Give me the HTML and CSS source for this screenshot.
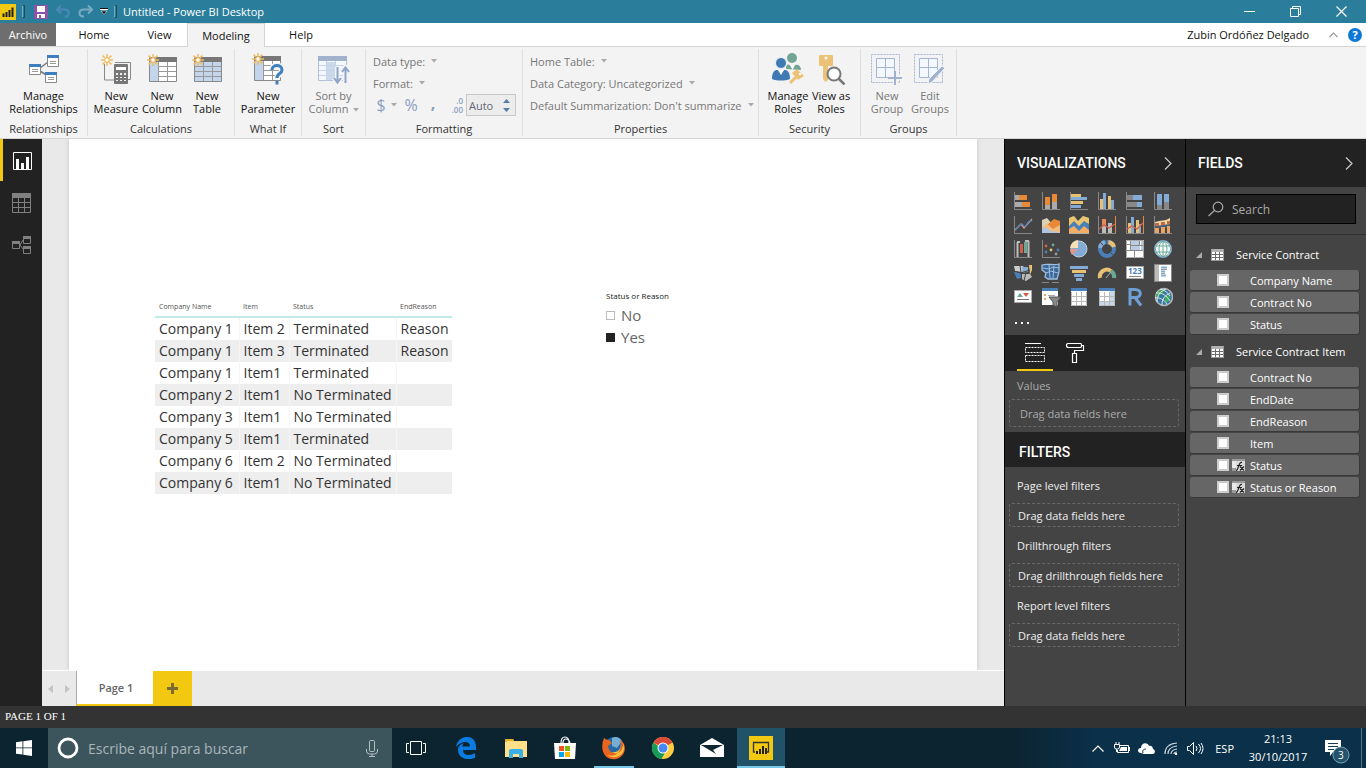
FILE: index.html
```html
<!DOCTYPE html>
<html lang="en">
<head>
<meta charset="utf-8">
<title>Untitled - Power BI Desktop</title>
<link rel="stylesheet" href="styles.css">
</head>
<body>
<svg class="defs" aria-hidden="true">
  <defs>
    <symbol id="spark" viewBox="0 0 12 12"><path d="M6 0v3M6 9v3M0 6h3M9 6h3M1.600 1.600l2.200 2.200M8.200 8.200l2.200 2.200M10.400 1.600l-2.200 2.200M3.800 8.200l-2.200 2.200" stroke="#eebd63" stroke-width="1.500"/><circle cx="6" cy="6" r="2.300" fill="#fff" stroke="#eebd63" stroke-width="1.300"/></symbol>
    <symbol id="tbl" viewBox="0 0 13 12"><path d="M0 0h13v12H0z" fill="#fff"/><path d="M0 0h13v3H0z" fill="#b0b0b0"/><path d="M0 5.500h13M0 8.500h13M4.500 3v9M8.500 3v9M0 11.500h13" stroke="#6a6a6a"/><path d="M.5 0v12M12.500 0v12M0 11.500h13" stroke="#999"/></symbol>
    <symbol id="calc" viewBox="0 0 13 12"><path d="M0 0h13v12H0z" fill="#999"/><path d="M0 2h4v7H0z" fill="#e8e8e8"/><path d="M4 2h9v10H4z" fill="#d8d8d8"/><path d="M4 11.500c3 0 2-9 6-8M5 6.500h5M8 7.500l4 4M12 7.500l-4 4" stroke="#222" stroke-width="1.200" fill="none"/></symbol>
    <symbol id="caret" viewBox="0 0 6 4"><path d="M0 0h6L3 3.500z" fill="currentColor"/></symbol>
  </defs>
</svg>

<header class="titlebar">
  <svg class="app-logo" width="16" height="16" viewBox="0 0 16 16"><path d="M0 0h16v16H0z" fill="#f2c811"/><path d="M3.500 13V9.500M6.500 13V8M9.500 13V6M12.500 13V3.500" stroke="#222" stroke-width="2"/></svg>
  <span class="bar-sep"></span>
  <button class="quick" aria-label="Save"><svg width="14" height="14" viewBox="0 0 14 14"><path d="M0 0h14v14H0z" fill="#8c53a8"/><path d="M3 1h8v6H3zM3 9h8v4H3z" fill="#fff"/><path d="M5 10h2v3H5z" fill="#8c53a8"/></svg></button>
  <button class="quick" aria-label="Undo"><svg width="15" height="13" viewBox="0 0 15 13"><path d="M5 0.500L1 4.500l4 4M1 4.500h8c5 0 5 7 0 7" fill="none" stroke="#4a88b8" stroke-width="2"/></svg></button>
  <button class="quick" aria-label="Redo"><svg width="15" height="13" viewBox="0 0 15 13"><path d="M10 .5l4 4-4 4M14 4.500H6c-6 0-6 7 0 7" fill="none" stroke="#78aac2" stroke-width="2"/></svg></button>
  <button class="quick quick-menu" aria-label="Customize"><svg width="8" height="7" viewBox="0 0 8 7"><path d="M0 .5h8" stroke="#111"/><path d="M0 1.500h8" stroke="#fff"/><path d="M1 3h6L4 6.500z" fill="#111" stroke="#fff" stroke-width=".5"/></svg></button>
  <span class="bar-sep"></span>
  <h1 class="title">Untitled - Power BI Desktop</h1>
  <div class="win-controls">
    <button aria-label="Minimize"><svg width="11" height="11" viewBox="0 0 11 11"><path d="M0 5.500h11" stroke="#fff"/></svg></button>
    <button aria-label="Restore"><svg width="11" height="11" viewBox="0 0 11 11"><path d="M.5 2.500h8v8h-8zM2.500 2V.5h8v8H9" fill="none" stroke="#fff"/></svg></button>
    <button aria-label="Close"><svg width="11" height="11" viewBox="0 0 11 11"><path d="M.5.5l10 10M10.500.5l-10 10" stroke="#fff" stroke-width="1.200"/></svg></button>
  </div>
</header>

<nav class="tabs">
  <button class="tab tab-file">Archivo</button>
  <button class="tab tab-home">Home</button>
  <button class="tab tab-view">View</button>
  <button class="tab tab-active">Modeling</button>
  <button class="tab tab-help">Help</button>
  <span class="user">Zubin Ordóñez Delgado</span>
  <button class="plain" aria-label="Collapse ribbon"><svg width="9" height="6" viewBox="0 0 9 6"><path d="M.5 5L4.500 1l4 4" fill="none" stroke="#999" stroke-width="1.200"/></svg></button>
  <button class="help" aria-label="Help">?</button>
</nav>

<section class="ribbon">
  <div class="group g-rel">
    <div class="group-body">
      <button class="big"><svg width="30" height="30" viewBox="0 0 30 30"><path d="M11 14l8-6M11 17l8 5" stroke="#777" stroke-width="1.500"/><g fill="#fff" stroke="#888"><path d="M18.500 1.500h11v11h-11zM.5 10.500h11v10H.5zM16.500 18.500h11v10h-11z"/></g><path d="M18 1h12v3H18zM0 10h12v3H0zM16 18h12v3H16z" fill="#3f7fbf"/><path d="M21 7.500h6M21 9.500h6M3 15.500h6M3 17.500h6M19 23.500h6M19 25.500h6" stroke="#999"/></svg><span>Manage<br>Relationships</span></button>
    </div>
    <div class="group-name">Relationships</div>
  </div>
  <div class="group g-calc">
    <div class="group-body">
      <button class="big"><svg width="30" height="30" viewBox="0 0 30 30"><path d="M3.500 10v16h11M14 8.500h15.500v17H27" fill="none" stroke="#888"/><use href="#spark" width="12" height="12"/><rect x="13" y="10" width="14" height="20" rx="1" fill="#777"/><path d="M15 13h10v3H15z" fill="#fff"/><path d="M15 19h2v2h-2zM19 19h2v2h-2zM23 19h2v2h-2zM15 23h2v1h-2zM19 23h2v1h-2zM23 23h2v1h-2zM15 26h2v1h-2zM19 26h2v1h-2zM23 26h2v1h-2z" fill="#eee"/></svg><span>New<br>Measure</span></button>
      <button class="big"><svg width="30" height="30" viewBox="0 0 30 30"><path d="M2.500 3.500h27v24h-27z" fill="#fff" stroke="#888"/><path d="M3 8h8v19H3z" fill="#c2d5ea"/><path d="M3 3h27v5H3z" fill="#777"/><path d="M11.500 8v19M20.500 8v19M11 12.500h18M11 17.500h18M11 22.500h18" stroke="#999"/><use href="#spark" width="12" height="12"/></svg><span>New<br>Column</span></button>
      <button class="big"><svg width="30" height="30" viewBox="0 0 30 30"><path d="M2.500 3.500h27v24h-27z" fill="#c2d5ea" stroke="#888"/><path d="M3 3h27v5H3z" fill="#777"/><path d="M11.500 8v19M20.500 8v19M3 12.500h26M3 17.500h26M3 22.500h26" stroke="#999"/><use href="#spark" width="12" height="12"/></svg><span>New<br>Table</span></button>
    </div>
    <div class="group-name">Calculations</div>
  </div>
  <div class="group g-what">
    <div class="group-body">
      <button class="big"><svg width="32" height="32" viewBox="0 0 32 32"><path d="M2.500 3.500h26v24h-26z" fill="#fff" stroke="#888"/><path d="M3 8h8v19H3z" fill="#c2d5ea"/><path d="M3 3h26v5H3z" fill="#777"/><path d="M11.500 8v19M20.500 8v19M11 12.500h18M11 17.500h18M11 22.500h18" stroke="#999"/><path d="M20 17c0-6 10-6 10 0 0 4-5 3-5 9M25 28v3" fill="none" stroke="#f3f3f3" stroke-width="6"/><path d="M20 17c0-6 10-6 10 0 0 4-5 3-5 8M25 28v3.500" fill="none" stroke="#3f7fbf" stroke-width="3"/><use href="#spark" width="12" height="12"/></svg><span>New<br>Parameter</span></button>
    </div>
    <div class="group-name">What If</div>
  </div>
  <div class="group g-sort">
    <div class="group-body">
      <button class="big off"><svg width="32" height="30" viewBox="0 0 32 30"><path d="M.5 3.500h28v23H.5z" fill="#f3f8ff" stroke="#b3c0d6"/><path d="M9 8h8v18H9z" fill="#cbd9ec"/><path d="M0 2h29v5H0z" fill="#a2b2cd"/><path d="M8.500 7v20M17.500 7v20M1 11.500h27M1 16.500h27M1 21.500h27" stroke="#c7d4e8"/><path d="M19.500 13v15M16 24l3.500 4.500L23 24M27.500 29V14M24 18l3.500-4.500L31 18" fill="none" stroke="#f3f3f3" stroke-width="5"/><path d="M19.500 13v15M16 24l3.500 4.500L23 24M27.500 29V14M24 18l3.500-4.500L31 18" fill="none" stroke="#8fa5c9" stroke-width="2"/></svg><span>Sort by<br>Column<svg class="caret" width="6" height="4"><use href="#caret"/></svg></span></button>
    </div>
    <div class="group-name">Sort</div>
  </div>
  <div class="group g-format">
    <div class="group-body lines">
      <button class="line">Data type: <svg class="caret" width="6" height="4"><use href="#caret"/></svg></button>
      <button class="line">Format: <svg class="caret" width="6" height="4"><use href="#caret"/></svg></button>
      <div class="format-row">
        <button class="sym" aria-label="Currency">$</button>
        <svg class="caret" width="6" height="4"><use href="#caret"/></svg>
        <button class="sym" aria-label="Percent">%</button>
        <button class="sym comma" aria-label="Thousands separator">,</button>
        <label class="dec" for="decimals" aria-label="Decimal places"><span>.0</span><span>.00</span></label>
        <span class="auto"><input id="decimals" value="Auto"><svg width="7" height="13" viewBox="0 0 7 13"><path d="M0 4l3.500-4L7 4zM0 9h7l-3.500 4z" fill="#5a7aa8"/></svg></span>
      </div>
    </div>
    <div class="group-name">Formatting</div>
  </div>
  <div class="group g-prop">
    <div class="group-body lines">
      <button class="line">Home Table: <svg class="caret" width="6" height="4"><use href="#caret"/></svg></button>
      <button class="line">Data Category: Uncategorized <svg class="caret" width="6" height="4"><use href="#caret"/></svg></button>
      <button class="line">Default Summarization: Don't summarize <svg class="caret" width="6" height="4"><use href="#caret"/></svg></button>
    </div>
    <div class="group-name">Properties</div>
  </div>
  <div class="group g-sec">
    <div class="group-body">
      <button class="big"><svg width="32" height="32" viewBox="0 0 32 32"><circle cx="20" cy="5" r="5" fill="#72a593"/><path d="M14 16c0-6 3-5 6-2 4-4 9-2 9 3z" fill="#72a593"/><path d="M18 12l2.500 5 2.500-5z" fill="#fff"/><circle cx="9" cy="10" r="5.500" fill="#3f7ab5" stroke="#f3f3f3"/><path d="M0 26c0-10 5-10 9-8 4-2 9-2 9 8-5 2-13 2-18 0z" fill="#3f7ab5"/><path d="M6 17l3 5 3-5z" fill="#fff"/><path d="M18 30l7-7" stroke="#ecc276" stroke-width="3"/><path d="M20 20l5-4 7 7-6 4z" fill="#ecc276"/><circle cx="28" cy="21" r="1.200" fill="#fff"/></svg><span>Manage<br>Roles</span></button>
      <button class="big"><svg width="30" height="32" viewBox="0 0 30 32"><rect x="3" y="2" width="14" height="11" rx="1" fill="#ecc276"/><circle cx="10" cy="5" r="1.500" fill="#fff"/><path d="M7 13h5v14l-2.500 2L7 26z" fill="#ecc276"/><circle cx="18" cy="21" r="6.500" fill="#fff" stroke="#777" stroke-width="2"/><path d="M22.500 25.500l6 6" stroke="#777" stroke-width="2.500"/></svg><span>View as<br>Roles</span></button>
    </div>
    <div class="group-name">Security</div>
  </div>
  <div class="group g-groups">
    <div class="group-body">
      <button class="big off"><svg width="32" height="32" viewBox="0 0 32 32"><path d="M.5 1.500h28v28H.5z" fill="none" stroke="#a5b5d2" stroke-dasharray="2 1"/><path d="M5.500 5.500h18v19h-18zM14.500 5v19M5 14.500h18" fill="#f3f8ff" stroke="#a5b5d2"/><path d="M24.500 18v13M18 24.500h13" stroke="#f3f3f3" stroke-width="5"/><path d="M24 18v14M17 25h14" stroke="#a0b1d0" stroke-width="2"/></svg><span>New<br>Group</span></button>
      <button class="big off"><svg width="32" height="32" viewBox="0 0 32 32"><path d="M.5 1.500h28v28H.5z" fill="none" stroke="#a5b5d2" stroke-dasharray="2 1"/><path d="M5.500 5.500h18v19h-18zM14.500 5v19M5 14.500h18" fill="#f3f8ff" stroke="#a5b5d2"/><path d="M31 15L18 29l-4 2 1-5 13-13z" fill="#a0b1d0" stroke="#f3f3f3"/></svg><span>Edit<br>Groups</span></button>
    </div>
    <div class="group-name">Groups</div>
  </div>
</section>

<main class="workspace">
  <nav class="rail">
    <button class="rail-item rail-on" aria-label="Report"><svg width="19" height="18" viewBox="0 0 19 18"><path d="M.5.5h18v17H.5z" fill="none" stroke="#fff"/><path d="M3 7h3v10H3zM8 11h3v6H8zM13 5h3v12h-3z" fill="#fff"/></svg></button>
    <button class="rail-item" aria-label="Data"><svg width="19" height="20" viewBox="0 0 19 20"><path d="M0 0h19v5H0z" fill="#808080"/><path d="M.5.5h18v19H.5zM6.500 5v14M12.500 5v14M0 9.500h19M0 14.500h19" fill="none" stroke="#808080"/></svg></button>
    <button class="rail-item" aria-label="Relationships"><svg width="19" height="18" viewBox="0 0 19 18"><path d="M.5 5.500h7v7h-7zM11.500.5h7v7h-7zM11.500 10.500h7v7h-7zM8 9l3-5M8 9l3 4" fill="none" stroke="#808080"/><path d="M0 5h8v3H0zM11 0h8v3h-8zM11 10h8v3h-8z" fill="#808080"/></svg></button>
  </nav>

  <section class="report">
    <div class="canvas">
      <table class="visual data">
        <thead><tr><th class="c-name">Company Name</th><th class="c-item">Item</th><th class="c-status">Status</th><th>EndReason</th></tr></thead>
        <tbody>
          <tr><td>Company 1</td><td>Item 2</td><td>Terminated</td><td>Reason</td></tr>
          <tr><td>Company 1</td><td>Item 3</td><td>Terminated</td><td>Reason</td></tr>
          <tr><td>Company 1</td><td>Item1</td><td>Terminated</td><td></td></tr>
          <tr><td>Company 2</td><td>Item1</td><td>No Terminated</td><td></td></tr>
          <tr><td>Company 3</td><td>Item1</td><td>No Terminated</td><td></td></tr>
          <tr><td>Company 5</td><td>Item1</td><td>Terminated</td><td></td></tr>
          <tr><td>Company 6</td><td>Item 2</td><td>No Terminated</td><td></td></tr>
          <tr><td>Company 6</td><td>Item1</td><td>No Terminated</td><td></td></tr>
        </tbody>
      </table>
      <div class="visual slicer">
        <div class="slicer-title">Status or Reason</div>
        <label><input type="checkbox">No</label>
        <label><input type="checkbox" checked>Yes</label>
      </div>
    </div>
    <div class="pages">
      <button class="arrow" aria-label="Previous page"><svg width="5" height="8" viewBox="0 0 5 8"><path d="M5 0v8L0 4z" fill="#c3c3c3"/></svg></button>
      <button class="arrow" aria-label="Next page"><svg width="5" height="8" viewBox="0 0 5 8"><path d="M0 0v8l5-4z" fill="#c3c3c3"/></svg></button>
      <button class="page-tab">Page 1</button>
      <button class="page-add" aria-label="Add page"><svg width="11" height="11" viewBox="0 0 11 11"><path d="M5.500 0v11M0 5.500h11" stroke="#7a6c35" stroke-width="3"/></svg></button>
    </div>
  </section>

  <aside class="pane">
    <header class="pane-head"><h2>VISUALIZATIONS</h2><button class="plain" aria-label="Collapse"><svg width="8" height="13" viewBox="0 0 8 13"><path d="M1 .5l6 6-6 6" fill="none" stroke="#ccc" stroke-width="1.200"/></svg></button></header>
    <div class="gallery">
      <svg viewBox="0 0 20 20"><path d="M1.500 1v17.500H19" fill="none" stroke="#888"/><path d="M2 4h4v5H2zM2 11h7v5H2z" fill="#aaa"/><path d="M6 4h8v5H6zM9 11h8v5H9z" fill="#e8893a"/></svg>
      <svg viewBox="0 0 20 20"><path d="M1.500 1v17.500H19" fill="none" stroke="#888"/><path d="M4 14h5v4H4zM11 11h5v7h-5z" fill="#aaa"/><path d="M4 6h5v8H4zM11 3h5v8h-5z" fill="#e8893a"/></svg>
      <svg viewBox="0 0 20 20"><path d="M1.500 1v17.500H19" fill="none" stroke="#888"/><path d="M2 3h10v3H2zM2 10h12v3H2z" fill="#e9c172"/><path d="M2 6h16v3H2zM2 14h10v3H2z" fill="#84abd6"/></svg>
      <svg viewBox="0 0 20 20"><path d="M1.500 1v17.500H19" fill="none" stroke="#888"/><path d="M3 8h3v10H3zM11 5h3v13h-3z" fill="#e9c172"/><path d="M6 2h3v16H6zM14 9h3v9h-3z" fill="#84abd6"/></svg>
      <svg viewBox="0 0 20 20"><path d="M1.500 1v17.500H19" fill="none" stroke="#888"/><path d="M2 4h6v5H2zM2 11h10v5H2z" fill="#888"/><path d="M8 4h9v5H8zM12 11h5v5h-5z" fill="#84abd6"/></svg>
      <svg viewBox="0 0 20 20"><path d="M1.500 1v17.500H19" fill="none" stroke="#888"/><path d="M4 14h5v4H4zM11 11h5v7h-5z" fill="#888"/><path d="M4 3h5v11H4zM11 3h5v8h-5z" fill="#84abd6"/></svg>

      <svg viewBox="0 0 20 20"><path d="M1.500 1v17.500H19" fill="none" stroke="#888"/><path d="M2 15l6-6 3 4 8-9" fill="none" stroke="#e3978b" stroke-width="1.300"/><path d="M2 14c4 0 5-6 7-5s3 5 5 0 3-2 5-3" fill="none" stroke="#4a80b8" stroke-width="1.300"/></svg>
      <svg viewBox="0 0 20 20"><path d="M1 5l5-2 13 15H1z" fill="#ddd1b4"/><path d="M1 14l6-5 6-5 6 2v12H1z" fill="#e8893a"/><path d="M1 12l5-3 6 5 7-4v8H1z" fill="#f2bd82"/><path d="M1 14c4-4 6 1 9 2s5 0 9 2H1z" fill="#aec5df"/></svg>
      <svg viewBox="0 0 20 20"><path d="M0 3l5-2 4 5 5-5 6 2v15H0z" fill="#4a80b8"/><path d="M0 3l5-2 4 5 5-5 6 2v6l-5-3-5 5-5-5-5 5z" fill="#ecc46c"/><path d="M0 14l5-3 5 5 5-5 5 4v3H0z" fill="#f5ad66"/><path d="M0 18.500h20" stroke="#aaa"/></svg>
      <svg viewBox="0 0 20 20"><path d="M1.500 1v17.500H19" fill="none" stroke="#888"/><path d="M5 4h4v14H5zM11 8h4v10h-4z" fill="#bbb"/><path d="M5 4h4v7H5z" fill="#e8895a"/><path d="M2 14l5-4 5 3 6-4" fill="none" stroke="#d35e46" stroke-width="1.300"/><path d="M18.500 1v17" stroke="#e8893a"/></svg>
      <svg viewBox="0 0 20 20"><path d="M1.500 1v17.500H19" fill="none" stroke="#888"/><path d="M3 8h3v10H3zM11 5h3v13h-3z" fill="#e9c172"/><path d="M6 2h3v16H6zM14 9h2v9h-2z" fill="#84abd6"/><path d="M2 14l5-3 5 3 6-6" fill="none" stroke="#d35e46" stroke-width="1.300"/><path d="M18.500 1v17" stroke="#e8893a"/></svg>
      <svg viewBox="0 0 20 20"><path d="M1.500 1v17.500H19" fill="none" stroke="#888"/><path d="M2 7l4-1 7-1 4-2v9H2z" fill="#f1d4a0"/><path d="M2 11l15-2v4H2z" fill="#4d5d73"/><path d="M2 8h4v3H2zM8 7h4v3H8zM14 6h3v3h-3z" fill="#b96e49"/><path d="M2 13h4v5H2zM8 12h4v6H8zM14 11h3v7h-3z" fill="#e9a466"/></svg>

      <svg viewBox="0 0 20 20"><path d="M1.500 1v17.500H19" fill="none" stroke="#888"/><path d="M4.500 3v15M15.500 2v16M4 3h3M12 2h4" stroke="#bbb" stroke-width="2"/><path d="M7 5h3v9H7z" fill="#d35e46"/><path d="M11 3h3v11h-3z" fill="#6aaa94"/></svg>
      <svg viewBox="0 0 20 20"><path d="M1.500 1v17.500H19" fill="none" stroke="#888"/><circle cx="5" cy="7" r="1.400" fill="#d35e46"/><circle cx="12" cy="6" r="1.400" fill="#6aaa94"/><circle cx="5" cy="13" r="1.400" fill="#4a80b8"/><circle cx="10" cy="11" r="1.400" fill="#e9c172"/><circle cx="17" cy="11" r="1.400" fill="#4a80b8"/><circle cx="15" cy="15" r="1.400" fill="#999"/></svg>
      <svg viewBox="0 0 20 20"><circle cx="10" cy="10" r="8" fill="#84abd6" stroke="#c0cfdf"/><path d="M9 9V1a9 9 0 0 0-8 8z" fill="#f5e0b7"/><path d="M9 10L3 16a9 9 0 0 1-2-6z" fill="#e3978b"/></svg>
      <svg viewBox="0 0 20 20"><circle cx="10" cy="10" r="7" fill="none" stroke="#4a80b8" stroke-width="4"/><path d="M10 3a7 7 0 0 1 6 4M3 9a7 7 0 0 1 5-6" fill="none" stroke="#84abd6" stroke-width="4"/><path d="M12 3a7 7 0 0 1 5 5" fill="none" stroke="#e9c172" stroke-width="4"/><path d="M3 3l3 3M14 14l3 3M10 0v5" stroke="#444"/></svg>
      <svg viewBox="0 0 20 20"><path d="M1 1h18v18H1z" fill="#fff"/><path d="M6 2h9v9H6zM16 2h2v9h-2z" fill="#b8cce2"/><path d="M5.500 1v10M1 5.500h4M1 11.500h18M9.500 11v7M6 6.500h13M14.500 2v5" fill="none" stroke="#888"/><path d="M1.500 1.500h17v17h-17z" fill="none" stroke="#aaa"/></svg>
      <svg viewBox="0 0 20 20"><circle cx="10" cy="10" r="8.500" fill="#fff"/><g fill="none" stroke="#6aaa94"><circle cx="10" cy="10" r="7.500"/><ellipse cx="10" cy="10" rx="4" ry="7.500"/><path d="M10 2v16M3 7h14M3 13h14"/></g><circle cx="10" cy="10" r="8.500" fill="none" stroke="#6d9ed4"/></svg>

      <svg viewBox="0 0 20 20"><path d="M1 3h9l2 3-3 3-7-1z" fill="#ccc"/><path d="M9 4h6v5l-5 1z" fill="#84abd6"/><path d="M16 2h3v5l-2 5z" fill="#e9c172"/><path d="M1 9l7 1v5l-4 1z" fill="#4a80b8"/><path d="M9 11h8l2 3-6 4-5-2z" fill="#bbb"/><path d="M1 8l7 2 9-3M7 2l2 16M13 9l-2 9" fill="none" stroke="#444"/></svg>
      <svg viewBox="0 0 20 20"><path d="M1 2c6-2 11 1 17-1v8l-2 7H7l-3-2 1-4-4-3z" fill="#3a6795" stroke="#9fc0e2" stroke-width="1.300"/><path d="M2 5l6 1 4-2 6 1M5 10l5-2 7 2M8 2l1 13M13 3l-1 12" fill="none" stroke="#9fc0e2"/><path d="M1 19.500h7M11 19.500h7" stroke="#888"/></svg>
      <svg viewBox="0 0 20 20"><path d="M1 3h18v3H1zM5 11h10v3H5z" fill="#84abd6"/><path d="M3 7h14v3H3z" fill="#e9c172"/><path d="M7 15h6v3H7z" fill="#84abd6"/></svg>
      <svg viewBox="0 0 20 20"><path d="M3 15a7 7 0 0 1 11-7" fill="none" stroke="#e9c172" stroke-width="4"/><path d="M14 8a7 7 0 0 1 3 7" fill="none" stroke="#6aaa94" stroke-width="4"/><path d="M9 15l5-6" stroke="#aaa"/></svg>
      <svg viewBox="0 0 20 20"><path d="M1.500 3.500h17v12h-17z" fill="#fff" stroke="#aaa"/><text x="3" y="11" font-size="8" font-weight="700" fill="#4a80b8">123</text><path d="M4 13.500h12" stroke="#888"/></svg>
      <svg viewBox="0 0 20 20"><path d="M1.500 1.500h17v17h-17z" fill="#fff" stroke="#888"/><path d="M2 2h4v16H2z" fill="#bbb"/><path d="M8 4.500h6M8 8.500h4M8 12.500h5" stroke="#84abd6" stroke-width="2"/><path d="M8 6.500h6M8 10.500h4" stroke="#999"/></svg>

      <svg viewBox="0 0 20 20"><path d="M1.500 3.500h17v12h-17z" fill="#fff" stroke="#aaa"/><path d="M4 10l3-4 3 4z" fill="#6aaa94"/><path d="M10 6h6l-3 4z" fill="#d35e46"/><path d="M4 12.500h12" stroke="#777"/></svg>
      <svg viewBox="0 0 20 20"><path d="M1 1h16v17H1z" fill="#fff"/><path d="M1 1h16v3H1z" fill="#4a80b8"/><path d="M3 7h2v2H3zM3 11h2v2H3z" fill="#e9a466"/><path d="M7 8.500h7" stroke="#aaa"/><path d="M8 10h12l-4 5v5l-4-2v-3z" fill="#888" stroke="#555"/></svg>
      <svg viewBox="0 0 20 20"><path d="M2 1h16v18H2z" fill="#fff"/><path d="M2 1h16v3H2z" fill="#4a80b8"/><path d="M7.500 5v14M12.500 5v14M2 9.500h16M2 14.500h16M2.500 5v13.500h15V5" fill="none" stroke="#b9b9b9"/></svg>
      <svg viewBox="0 0 20 20"><path d="M2 1h16v18H2z" fill="#fff"/><path d="M13 4h5v15h-5zM2 15h16v4H2z" fill="#c7d8eb"/><path d="M2 1h16v3H2z" fill="#4a80b8"/><path d="M7.500 5v14M12.500 5v14M2 9.500h16M2 14.500h16M2.500 5v13.500h15V5" fill="none" stroke="#b9b9b9"/></svg>
      <svg viewBox="0 0 20 20"><path d="M5 18.500V2.500h5c7 0 7 8 0 8H5M10 10.500l6 8" fill="none" stroke="#6d9ed4" stroke-width="3"/></svg>
      <svg viewBox="0 0 20 20"><circle cx="11" cy="10" r="8.500" fill="#3776a9" stroke="#b6b6b6" stroke-width="1.500"/><path d="M3 8c2-5 6-6 9-5l-3 4-3 1-1 4zM12 9l5-1-1 6-4 2z" fill="#3fae5c"/><path d="M3 6c6-1 11 3 14 8M2 11c5-1 9 2 12 6M7 2c5 1 8 4 10 7M13 2C7 4 4 9 4 15M17 6c-5 2-8 6-8 12" fill="none" stroke="#dce5df"/></svg>
      <button class="more" aria-label="More visuals"><svg viewBox="0 0 20 20"><path d="M2 11h2v2H2zM8 11h2v2H8zM14 11h2v2h-2z" fill="#fff"/></svg></button>
    </div>
    <div class="well-tabs">
      <button class="well-tab well-on" aria-label="Fields"><svg width="20" height="20" viewBox="0 0 20 20"><path d="M0 .5h16" stroke="#fff"/><path d="M.5 4.500h19v5H.5zM.5 12.500h19v6H.5z" fill="none" stroke="#fff" stroke-dasharray="2 1"/></svg></button>
      <button class="well-tab" aria-label="Format"><svg width="20" height="20" viewBox="0 0 20 20"><path d="M3.500.5h12q1 0 1 2t-1 2h-12q-2 0-2-2t2-2zM16 2.500h2.500v5h-9v3M7.500 10.500h4v9h-4z" fill="none" stroke="#fff" stroke-width="1.200"/></svg></button>
    </div>
    <div class="values"><div class="values-label">Values</div><div class="drop">Drag data fields here</div></div>
    <h2 class="filters-head">FILTERS</h2>
    <div class="filters">
      <h3>Page level filters</h3><div class="drop">Drag data fields here</div>
      <h3>Drillthrough filters</h3><div class="drop">Drag drillthrough fields here</div>
      <h3>Report level filters</h3><div class="drop">Drag data fields here</div>
    </div>
  </aside>

  <aside class="pane">
    <header class="pane-head"><h2>FIELDS</h2><button class="plain" aria-label="Collapse"><svg width="8" height="13" viewBox="0 0 8 13"><path d="M1 .5l6 6-6 6" fill="none" stroke="#ccc" stroke-width="1.200"/></svg></button></header>
    <div class="search-wrap">
      <label class="search"><svg width="16" height="16" viewBox="0 0 16 16"><circle cx="10" cy="6" r="4.800" fill="none" stroke="#aaa" stroke-width="1.200"/><path d="M6.500 9.500L.5 15" stroke="#aaa" stroke-width="1.200"/></svg><input type="search" placeholder="Search" aria-label="Search"></label>
    </div>
    <div class="field-list">
      <h3 class="entity"><svg width="6" height="6" viewBox="0 0 6 6"><path d="M6 0v6H0z" fill="#aaa"/></svg><svg width="13" height="12"><use href="#tbl"/></svg>Service Contract</h3>
      <label class="field"><input type="checkbox"><i></i>Company Name</label>
      <label class="field"><input type="checkbox"><i></i>Contract No</label>
      <label class="field"><input type="checkbox"><i></i>Status</label>
      <h3 class="entity"><svg width="6" height="6" viewBox="0 0 6 6"><path d="M6 0v6H0z" fill="#aaa"/></svg><svg width="13" height="12"><use href="#tbl"/></svg>Service Contract Item</h3>
      <label class="field"><input type="checkbox"><i></i>Contract No</label>
      <label class="field"><input type="checkbox"><i></i>EndDate</label>
      <label class="field"><input type="checkbox"><i></i>EndReason</label>
      <label class="field"><input type="checkbox"><i></i>Item</label>
      <label class="field"><input type="checkbox"><i><svg width="13" height="12"><use href="#calc"/></svg></i>Status</label>
      <label class="field"><input type="checkbox"><i><svg width="13" height="12"><use href="#calc"/></svg></i>Status or Reason</label>
    </div>
  </aside>
</main>

<div class="statusbar">PAGE 1 OF 1</div>

<footer class="taskbar">
  <button class="start" aria-label="Start"><svg width="16" height="16" viewBox="0 0 16 16"><path d="M0 2.200L6.500 1.300v6.200H0zM7.300 1.200L16 0v7.500H7.300zM0 8.300h6.500v6.300L0 13.700zM7.300 8.300H16V16l-8.700-1.200z" fill="#fff"/></svg></button>
  <label class="cortana"><svg width="22" height="22" viewBox="0 0 22 22"><circle cx="11" cy="11" r="9" fill="none" stroke="#fff" stroke-width="2.800"/></svg><input type="text" placeholder="Escribe aquí para buscar" aria-label="Escribe aquí para buscar"><svg width="12" height="17" viewBox="0 0 12 17"><rect x="3.500" y=".5" width="5" height="11" rx="1" fill="none" stroke="#b5c0c4"/><path d="M.5 9v2q0 3 3 3h5q3 0 3-3V9M6 14v2.500M3 16.500h6" fill="none" stroke="#b5c0c4"/></svg></label>
  <div class="apps">
    <button aria-label="Task view"><svg width="20" height="14" viewBox="0 0 20 14"><path d="M4.500.5h11v13h-11zM3 2.500H.5v9H3M17 2.500h2.500v9H17" fill="none" stroke="#fff"/></svg></button>
    <button aria-label="Edge"><svg width="22" height="22" viewBox="0 0 22 22"><path d="M0 10C2-3 20-4 20 10v3H7c0 6 7 6 12 3v5C11 24 2 21 2 13c0-4 3-6 6-7-1 1-1.500 2-1.500 3.500H14C14 3 5 4 0 10z" fill="#0a7be0"/></svg></button>
    <button aria-label="Files"><svg width="22" height="19" viewBox="0 0 22 19"><path d="M0 0h8l1 2h13v16H0z" fill="#ffdf88"/><path d="M0 0h8l1 2H2v1H0z" fill="#e8af28"/><path d="M4 19v-7q0-2 2-2h10q2 0 2 2v7h-4v-4H8v4z" fill="#38b0ea"/></svg></button>
    <button aria-label="Store"><svg width="24" height="24" viewBox="0 0 24 24"><path d="M1 7h22l-1 16H2z" fill="#fff"/><path d="M8 7q0-6 4-6t4 6M10 7q0-4 3-4 3 0 4 4" fill="none" stroke="#fff" stroke-width="1.200"/><path d="M6 10h5v5H6z" fill="#f25022"/><path d="M12 10h5v5h-5z" fill="#7fba00"/><path d="M6 16h5v5H6z" fill="#00a4ef"/><path d="M12 16h5v5h-5z" fill="#ffb900"/></svg></button>
    <button class="running" aria-label="Firefox"><svg width="24" height="24" viewBox="0 0 24 24"><circle cx="12" cy="11" r="10" fill="#2869a5"/><path d="M10 2q6-3 10 3l-5 7-5-2z" fill="#76add2"/><path d="M2 2q2 2 5 2l3 3-4 3c1 9 11 9 13 2 1-4-1-7-1-8 8 4 6 17-4 19C3 25-3 14 2 2z" fill="#e86421"/><path d="M19 7c0 8-5 10-9 9 5 4 12-1 11-9l1 5c0 8-10 12-17 7 9 3 15-4 14-12z" fill="#ffc33d"/></svg></button>
    <button aria-label="Chrome"><svg width="22" height="22" viewBox="0 0 22 22"><circle cx="11" cy="11" r="11" fill="#ffcd40"/><path d="M11 11L1.500 5.500a11 11 0 0 1 19 0z" fill="#dc4939"/><path d="M1.500 5.500a11 11 0 0 0 8 16.500l5-9-6-2z" fill="#159b59"/><circle cx="11" cy="11" r="5.500" fill="#fff"/><circle cx="11" cy="11" r="4.500" fill="#4687f0"/></svg></button>
    <button aria-label="Mail"><svg width="24" height="20" viewBox="0 0 24 20"><path d="M0 7L12 0l12 7v12H0z" fill="#fff"/><path d="M1 7h22l-10 5 3 4z" fill="#102630"/></svg></button>
    <button class="running current" aria-label="Power BI Desktop"><svg width="24" height="24" viewBox="0 0 24 24"><path d="M0 0h24v24H0z" fill="#f2c811"/><path d="M6 16H4.500V6.500h15V16H18" fill="none" stroke="#333" stroke-width="1.300"/><path d="M8 18v-3M11 18v-5M14 18v-8M17 18v-6" stroke="#222" stroke-width="2"/></svg></button>
  </div>
  <div class="tray">
    <button aria-label="Hidden icons"><svg width="12" height="7" viewBox="0 0 12 7"><path d="M.5 6.500L6 1l5.500 5.500" fill="none" stroke="#fff" stroke-width="1.200"/></svg></button>
    <button aria-label="Battery"><svg width="16" height="12" viewBox="0 0 16 12"><path d="M5 3.500h9.500v7h-11V8M15.500 5v4M2 0v2M5 0v2M.5 2.500h5V5q0 2-2 2H2Q.5 7 .5 5zM2.500 7v3" fill="none" stroke="#fff"/><path d="M7 5h6v4H5z" fill="#fff"/></svg></button>
    <button aria-label="OneDrive"><svg width="17" height="11" viewBox="0 0 17 11"><path d="M3 10c-4 0-4-5 0-5 0-6 7-6 8-2 2-1 4 1 4 3 3 1 2 5 0 5H6L3 10z" fill="#fff"/><path d="M5 10c-1-3 1-4 3-4" fill="none" stroke="#0a3048"/></svg></button>
    <button aria-label="Network"><svg width="14" height="13" viewBox="0 0 14 13"><path d="M1 12Q1 2 13 1M4 12q0-7 9-8M7 12q0-4 6-5M10 12q0-2 3-2" fill="none" stroke="#cfdae2" stroke-width="1.200"/><circle cx="12" cy="12" r="1.200" fill="#fff"/></svg></button>
    <button aria-label="Volume"><svg width="17" height="13" viewBox="0 0 17 13"><path d="M.5 4.500h2l4-4v12l-4-4h-2zM9 4q2 2.500 0 5M11.500 2q4 4.500 0 9M14 1q4 5.500 0 11" fill="none" stroke="#fff"/></svg></button>
    <button class="lang">ESP</button>
    <button class="clock">21:13<br>30/10/2017</button>
    <button class="notes" aria-label="Notifications, 3"><svg width="26" height="26" viewBox="0 0 26 26"><path d="M0 2h16v12H8l-3 4v-4H0z" fill="#fff"/><path d="M3 5.500h10M3 8.500h10M3 11.500h6" stroke="#174057"/><circle cx="16" cy="17" r="8" fill="#24536b" stroke="#77a0b0"/></svg><span class="badge">3</span></button>
  </div>
</footer>
</body>
</html>
```
FILE: styles.css
```css
* { box-sizing: border-box; }
body {
  margin: 0;
  height: 100vh;
  display: flex;
  flex-direction: column;
  overflow: hidden;
  font: 11px/13px "Open Sans", "Noto Sans", sans-serif;
  color: #222;
  background: #444;
}
button, input { font: inherit; color: inherit; }
button { border: 0; padding: 0; background: none; display: flex; align-items: center; justify-content: center; }
h1, h2, h3 { margin: 0; font-weight: 400; }
svg { flex: none; }
.defs { position: absolute; width: 0; height: 0; }

/* Title bar */
.titlebar { flex: none; height: 23px; display: flex; align-items: center; background: #2b7e9b; color: #fff; }
.bar-sep { width: 3px; height: 13px; border: 1px solid #174f63; border-left-color: #77abc0; margin: 0 9px 0 6px; }
.quick { width: 14px; margin-right: 8px; }
.quick-menu { width: 8px; margin-right: 6px; }
.quick-menu + .bar-sep { margin: 0 6px 0 0; }
.title { font-size: 11px; line-height: 20px; }
.win-controls { margin-left: auto; display: flex; padding-right: 2px; }
.win-controls button { width: 46px; height: 20px; }

/* Ribbon tabs */
.tabs { flex: none; height: 24px; display: flex; background: #fff; border-bottom: 1px solid #d4d4d4; align-items: center; color: #111; }
.tab { height: 24px; }
.tab-file { width: 56px; background: #6e6e6e; color: #fff; height: 23px; }
.tab-home { width: 76px; }
.tab-view { width: 55px; }
.tab-active { width: 78px; background: #f3f3f3; border: solid #d4d4d4; border-width: 1px 1px 0; align-self: flex-start; }
.tab-help { width: 72px; }
.user { margin-left: auto; }
.tabs .plain { margin: 0 10px 0 20px; }
.help { width: 14px; height: 14px; border-radius: 50%; background: #0f78d4; color: #fff; font-weight: 700; margin-right: 4px; }

/* Ribbon */
.ribbon { flex: none; display: flex; height: 92px; background: #f3f3f3; border-bottom: 1px solid #d4d4d4; padding: 2px 0; }
.group { display: flex; flex-direction: column; border-right: 1px solid #dedede; }
.group-body { flex: 1; display: flex; justify-content: center; }
.group-name { text-align: center; line-height: 14px; color: #333; }
.g-rel { width: 88px; }
.g-calc { width: 147px; }
.g-what { width: 67px; }
.g-sort { width: 64px; }
.g-format { width: 157px; }
.g-prop { width: 236px; }
.g-sec { width: 102px; }
.g-groups { width: 96px; }
.big { flex-direction: column; justify-content: flex-start; color: #111; padding-top: 4px; min-width: 43px; }
.g-calc .big + .big { margin-left: 2px; }
.big > svg { height: 32px; }
.big > span { margin-top: 4px; line-height: 13px; white-space: nowrap; }
.off { color: #777; }
.caret { color: #aaa; vertical-align: middle; margin-left: 2px; }
.off .caret { margin-left: 4px; }
.lines { flex-direction: column; justify-content: flex-start; align-items: flex-start; padding: 1px 0 0 7px; }
.line { height: 22px; color: #777; white-space: nowrap; gap: 4px; }
.format-row { height: 22px; display: flex; align-items: center; color: #8a9fc0; }
.sym { width: 16px; font-size: 16px; line-height: 20px; }
.format-row .caret + .sym { margin-left: 6px; }
.comma { width: 28px; font-weight: 700; align-self: flex-start; height: 18px; }
.dec { display: flex; flex-direction: column; font-size: 8px; line-height: 9px; text-align: right; width: 16px; margin: 0 3px 0 0; font-weight: 600; }
.auto { display: flex; align-items: center; width: 50px; height: 22px; border: 1px solid #c8c8c8; background: #ececec; padding: 0 5px 0 2px; color: #667; }
.auto input { flex: 1; width: 30px; min-width: 0; border: 0; padding: 0; background: none; }

/* Workspace */
.workspace { flex: 1; min-height: 0; display: flex; }
.rail { flex: none; width: 42px; background: #222; }
.rail-item { width: 42px; height: 42px; padding: 2px 0 0 1px; }
.rail-on { border-left: 3px solid #f2c811; padding-right: 2px; }
.report { flex: 1; min-width: 0; display: flex; flex-direction: column; background: #e9e9e9; }
.canvas { flex: 1; position: relative; margin: 0 27px 0 27px; background: #fff; box-shadow: 0 0 4px #c4c4c4; clip-path: inset(0 -5px 0 -5px); }
.visual { position: absolute; }
.data { left: 86px; top: 157px; width: 297px; table-layout: fixed; border-collapse: collapse; font-size: 14px; color: #333; }
.c-name { width: 84px; }
.c-item { width: 50px; }
.c-status { width: 107px; }
.data th { font-size: 7px; font-weight: 400; text-align: left; height: 21px; padding: 0 4px; border-bottom: 2px solid #bfeae5; color: #555; }
.data td { height: 22px; line-height: 22px; padding: 0 0 0 4px; border-right: 1px solid #f5f5f5; white-space: nowrap; }
.data td:last-child { border-right: 0; }
.data tr:nth-child(even) td { background: #eee; }
.slicer { left: 537px; top: 151px; font-size: 15px; color: #666; }
.slicer-title { font-size: 8px; line-height: 12px; color: #222; margin-bottom: 2px; }
.slicer label { display: flex; align-items: center; height: 22px; gap: 6px; }
.slicer input { appearance: none; width: 9px; height: 9px; margin: 0; border: 1px solid #bbb; }
.slicer input:checked { background: #222; border-color: #222; }
.pages { flex: none; display: flex; height: 36px; border-top: 1px solid #fff; color: #666; }
.arrow { width: 17px; }
.page-tab { width: 77px; background: #fff; border-left: 1px solid #aaa; border-bottom: 2px solid #f2c811; font-weight: 600; padding-left: 2px; }
.page-add { width: 39px; background: #f2c811; }

/* Side panes */
.pane { flex: none; width: 181px; border-left: 1px solid #000; background: #444; color: #fff; }
.pane-head { height: 48px; display: flex; align-items: center; justify-content: space-between; background: #222; padding: 0 13px 0 12px; }
h2 { font: 500 14px/20px Roboto, sans-serif; color: #fff; }
.gallery { display: grid; grid-template-columns: repeat(6, 20px); grid-auto-rows: 20px; gap: 4px 8px; padding: 4px 0 0 8px; height: 148px; }
.gallery svg { width: 20px; height: 20px; }
.well-tabs { display: flex; gap: 4px; background: #222; height: 36px; padding: 0 12px; }
.well-tab { width: 36px; }
.well-on { border-bottom: 2px solid #f2c811; padding-top: 2px; }
.values { height: 61px; padding: 6px 6px 0 4px; color: #aaa; }
.values-label { padding-left: 8px; line-height: 18px; margin-bottom: 4px; }
.drop { height: 28px; line-height: 28px; padding-left: 10px; border: 1px dashed #686868; border-radius: 3px; }
.filters-head { background: #222; padding: 2px 14px 0; height: 35px; line-height: 36px; }
.filters { padding: 0 6px 0 4px; color: #eee; }
.filters h3 { padding: 10px 0 0 8px; line-height: 18px; height: 36px; font-size: 11px; }
.filters .drop { height: 24px; line-height: 24px; padding-left: 8px; }
.search-wrap { height: 48px; padding: 7px 10px 0; border-bottom: 1px solid #303030; }
.search { height: 30px; display: flex; align-items: center; gap: 8px; padding-left: 11px; background: #222; border: 1px solid #000; font-size: 12px; }
.search input { flex: 1; min-width: 0; border: 0; padding: 0; background: none; color: #ccc; }
.search input::placeholder { color: #aaa; opacity: 1; }
.field-list { padding: 4px 6px 0 4px; }
.entity { height: 31px; display: flex; align-items: center; font-size: 11px; padding-left: 6px; white-space: nowrap; }
.entity svg + svg { margin: 0 12px 0 9px; }
.field { display: flex; align-items: center; height: 21px; margin-bottom: 1px; padding-left: 27px; background: #666; border: 1px solid #383838; border-width: 0 1px 1px 0; border-radius: 3px; }
.field input { appearance: none; width: 12px; height: 12px; margin: 0; background: #fff; border: 2px solid #ccc; }
.field i { width: 16px; margin-right: 5px; padding-left: 3px; display: flex; }

/* Status bar and taskbar */
.statusbar { flex: none; height: 22px; background: #333; color: #fff; font: 11px/20px "Liberation Serif", serif; padding-left: 5px; }
.taskbar { flex: none; height: 40px; display: flex; background: linear-gradient(90deg, #0c2330 0, #0c2330 74%, #0b3049 80%); color: #fff; }
.start { width: 48px; }
.cortana { width: 344px; background: #3c545c; display: flex; align-items: center; padding: 0 14px 0 9px; gap: 9px; font-size: 14px; }
.cortana input { flex: 1; min-width: 0; border: 0; padding: 0; background: none; }
.cortana input::placeholder { color: #aab6ba; opacity: 1; }
.apps { display: flex; gap: 1px; }
.apps button { width: 48px; height: 40px; }
.apps button:first-child { margin-right: 2px; }
.apps .running { background: linear-gradient(#76c7e8, #76c7e8) center bottom / 40px 2px no-repeat; }
.apps .current { background-color: #205268; background-size: 48px 2px; }
.tray { margin-left: auto; display: flex; align-items: center; gap: 8px; padding-right: 4px; }
.tray button { min-width: 16px; height: 40px; }
.lang { font-size: 11px; margin-left: 3px; }
.clock { width: 72px; font-size: 11px; line-height: 18px; text-align: center; margin-right: 2px; }
.tray .notes { width: 38px; position: relative; border-right: 1px solid #5b7585; justify-content: flex-start; padding: 5px 0 0 1px; }
.badge { position: absolute; left: 14px; top: 19px; line-height: 16px; font-size: 10px; }
```
